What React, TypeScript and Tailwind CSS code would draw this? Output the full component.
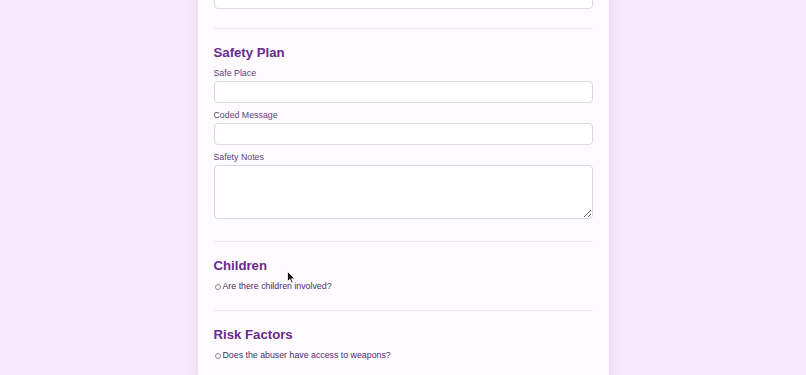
import React from "react";

const inputCls =
  "block w-full h-[22px] rounded-[4px] border border-[#dcd8e0] bg-white mb-1 outline-none";

function Label({ children }: { children: React.ReactNode }) {
  return (
    <div className="text-[8.8px] leading-[15px] pt-[1px] text-[#5f4278]">{children}</div>
  );
}

function Heading({ children }: { children: React.ReactNode }) {
  return (
    <h2 className="text-[13.2px] leading-[24px] font-bold text-[#6a2a8e]">
      {children}
    </h2>
  );
}

function Check({ children }: { children: React.ReactNode }) {
  return (
    <label className="flex items-center gap-[2px] h-[17px] pt-[1px] text-[8.8px] text-[#4c2d66]">
      <span className="ml-[1px] inline-block w-[6px] h-[6px] rounded-full border border-[#8a8690] bg-white" />
      <span>{children}</span>
    </label>
  );
}

export default function App() {
  return (
    <div
      className="min-h-[375px] h-[375px] overflow-hidden bg-[#f6e9fc] flex justify-center"
      style={{ fontFamily: '"Liberation Sans", Arial, sans-serif' }}
    >
      <div className="relative w-[411px] -mt-[13px] bg-[#fdfbfe] px-4 shadow-[0_0_12px_rgba(160,110,190,0.18)] h-[400px]">
        <section className="pb-[15px] border-b border-[#ece9ee]">
          <input className={inputCls} />
        </section>

        <section className="pt-3 pb-[15px] border-b border-[#ece9ee]">
          <Heading>Safety Plan</Heading>
          <Label>Safe Place</Label>
          <input className={inputCls} />
          <Label>Coded Message</Label>
          <input className={inputCls} />
          <Label>Safety Notes</Label>
          <textarea className="block w-full h-[54px] rounded-[4px] border border-[#dcd8e0] bg-white mb-[7px] resize-y outline-none" />
        </section>

        <section className="pt-3 pb-[15px] border-b border-[#ece9ee]">
          <Heading>Children</Heading>
          <Check>Are there children involved?</Check>
        </section>

        <section className="pt-3 pb-[15px]">
          <Heading>Risk Factors</Heading>
          <Check>Does the abuser have access to weapons?</Check>
        </section>

        <svg
          className="absolute left-[89px] top-[284px]"
          width="9"
          height="13"
          viewBox="0 0 9 13"
        >
          <path
            d="M0.5 0.5 L0.5 10.5 L3 8.3 L4.6 12 L6 11.4 L4.5 7.8 L7.8 7.8 Z"
            fill="#111"
            stroke="#fff"
            strokeWidth="0.8"
          />
        </svg>
      </div>
    </div>
  );
}
